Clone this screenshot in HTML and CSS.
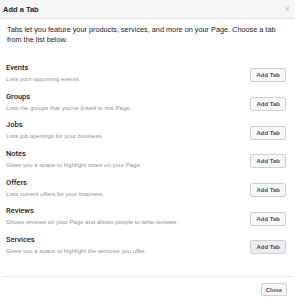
FILE: index.html
```html
<!DOCTYPE html>
<html lang="en">
<head>
  <meta charset="UTF-8">
  <title>Add a Tab</title>
  <link rel="stylesheet" href="styles.css">
</head>
<body>
  <div class="dialog">
    <div class="dialog-header">
      <span class="dialog-title">Add a Tab</span>
      <span class="dialog-close">&#215;</span>
    </div>

    <div class="dialog-body">
      <p class="intro">Tabs let you feature your products, services, and more on your Page. Choose a tab from the list below.</p>

      <ul class="tab-list">
        <li class="tab-row">
          <div class="tab-info">
            <div class="tab-name">Events</div>
            <div class="tab-desc">Lists your upcoming events.</div>
          </div>
          <button class="btn">Add Tab</button>
        </li>
        <li class="tab-row">
          <div class="tab-info">
            <div class="tab-name">Groups</div>
            <div class="tab-desc">Lists the groups that you've linked to this Page.</div>
          </div>
          <button class="btn">Add Tab</button>
        </li>
        <li class="tab-row">
          <div class="tab-info">
            <div class="tab-name">Jobs</div>
            <div class="tab-desc">Lists job openings for your business.</div>
          </div>
          <button class="btn">Add Tab</button>
        </li>
        <li class="tab-row">
          <div class="tab-info">
            <div class="tab-name">Notes</div>
            <div class="tab-desc">Gives you a space to highlight notes on your Page.</div>
          </div>
          <button class="btn">Add Tab</button>
        </li>
        <li class="tab-row">
          <div class="tab-info">
            <div class="tab-name">Offers</div>
            <div class="tab-desc">Lists current offers for your business.</div>
          </div>
          <button class="btn">Add Tab</button>
        </li>
        <li class="tab-row">
          <div class="tab-info">
            <div class="tab-name">Reviews</div>
            <div class="tab-desc">Shows reviews on your Page and allows people to write reviews.</div>
          </div>
          <button class="btn">Add Tab</button>
        </li>
        <li class="tab-row">
          <div class="tab-info">
            <div class="tab-name">Services</div>
            <div class="tab-desc">Gives you a space to highlight the services you offer.</div>
          </div>
          <button class="btn btn-active">Add Tab</button>
        </li>
      </ul>
    </div>

    <div class="dialog-footer">
      <button class="btn">Close</button>
    </div>
  </div>
</body>
</html>
```

FILE: styles.css
```css
:root {
  --text-dark: #1d2129;
  --text-muted: #90949c;
  --header-bg: #f5f6f7;
  --border: #e5e5e5;
  --btn-bg: #f6f7f9;
  --btn-border: #ced0d4;
}

body {
  margin: 0;
  background: #ffffff;
  font-family: 'Liberation Sans', Arial, sans-serif;
  color: var(--text-dark);
}

.dialog {
  width: 295px;
  height: 300px;
  display: flex;
  flex-direction: column;
}

.dialog-header {
  height: 18px;
  flex-shrink: 0;
  background: var(--header-bg);
  border-bottom: 1px solid var(--border);
  display: flex;
  align-items: center;
  justify-content: space-between;
  padding: 0 5px 0 3px;
}

.dialog-title {
  font-size: 7.5px;
  font-weight: bold;
}

.dialog-close {
  color: #bec2c9;
  font-size: 9px;
}

.dialog-body {
  padding: 6px 9px 0 7px;
  flex: 1;
}

.intro {
  margin: 0 0 14px 0;
  font-size: 7.3px;
  line-height: 10px;
}

.tab-list {
  list-style: none;
  margin: 0;
  padding: 0;
}

.tab-row {
  display: flex;
  align-items: center;
  justify-content: space-between;
  padding: 3px 0;
  height: 22.7px;
  margin-left: -1px;
}

.tab-name {
  font-family: Roboto, 'Liberation Sans', sans-serif;
  font-size: 7.5px;
  font-weight: 500;
  line-height: 12px;
}

.tab-desc {
  font-size: 6px;
  color: var(--text-muted);
  line-height: 11px;
}

.btn {
  font-family: 'Liberation Sans', Arial, sans-serif;
  font-size: 6px;
  font-weight: bold;
  color: #4b4f56;
  background: var(--btn-bg);
  border: 1px solid var(--btn-border);
  border-radius: 2px;
  height: 14px;
  padding: 0 5px;
  margin-top: 4px;
}

.btn-active {
  background: #ebedf0;
}

.dialog-footer {
  flex-shrink: 0;
  margin: 0 3px;
  border-top: 1px solid var(--border);
  display: flex;
  justify-content: flex-end;
  padding: 6px 5px 4px 0;
}

.dialog-footer .btn {
  margin-top: 0;
  height: 13px;
  padding: 0 4px;
}
```
